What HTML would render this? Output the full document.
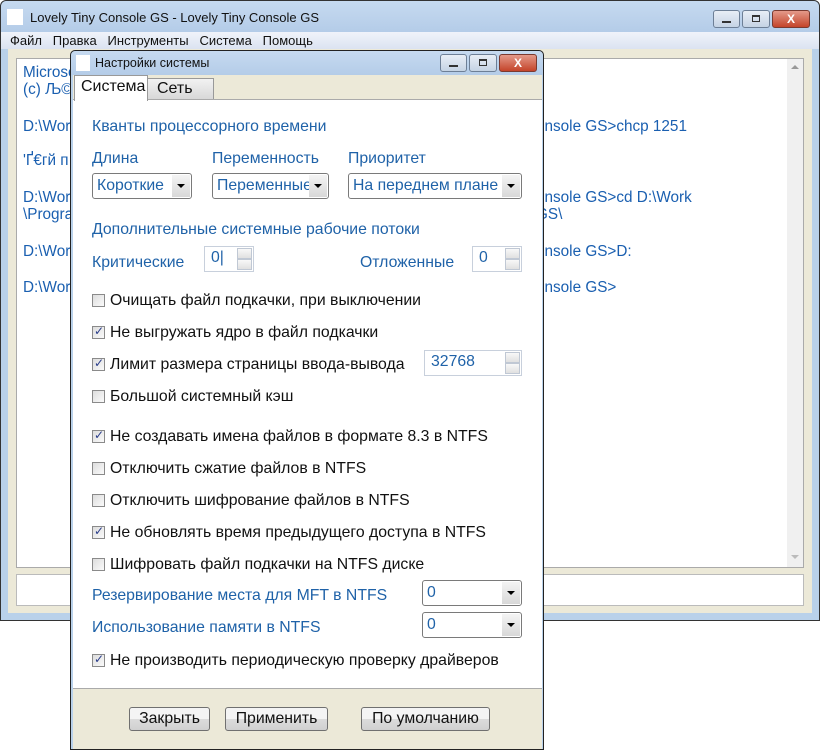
<!DOCTYPE html>
<html><head><meta charset="utf-8"><style>
*{box-sizing:border-box;margin:0;padding:0}
body{width:820px;height:750px;background:#fff;position:relative;overflow:hidden;font-family:"Liberation Sans","DejaVu Sans",sans-serif}
.a{position:absolute}
.main{left:0;top:0;width:820px;height:621px;border:1px solid #333;border-radius:6px 6px 0 0;background:#b9d1ea}
.tb{background:linear-gradient(#c6daf0,#b4cce8)}
.wbtn{position:absolute;top:0;height:18px;border:1px solid #6d7f96;border-radius:3px;background:linear-gradient(#e8eef6,#c5d3e4)}
.wbtn.x{background:linear-gradient(#e49a8a,#c4442a);border-color:#7a3a30;color:#fff;font-weight:bold;font-size:12px;text-align:center;line-height:16px}
.con{font-size:15.3px;color:#1a5fb0;white-space:nowrap}
.lbl{font-size:15.8px;color:#1f62a8;white-space:nowrap}
.blk{font-size:15.8px;color:#111;white-space:nowrap}
.combo{position:absolute;height:26px;border:1px solid #7a7a7a;border-radius:3px;background:#fff;font-size:15.8px;color:#1f62a8;padding:3px 0 0 4px;overflow:hidden;white-space:nowrap}
.combo .ar{position:absolute;right:1px;top:1px;width:18px;height:22px;background:linear-gradient(#f4f4f4,#d8d8d8)}
.combo .ar:after{content:"";position:absolute;left:5px;top:9px;border-left:4px solid transparent;border-right:4px solid transparent;border-top:4px solid #000}
.spin{position:absolute;height:26px;border:1px solid #c8d0dc;background:#fff;font-size:15.8px;color:#1f62a8;padding:2px 0 0 6px}
.spin .up,.spin .dn{position:absolute;right:1px;width:15px;height:11px;border:1px solid #c0c8d4;background:linear-gradient(#f8f8f8,#e0e0e0)}
.spin .up{top:1px}.spin .dn{top:12px}
.cb{position:absolute;left:92px;width:13px;height:13px;border:1px solid #8a8a8a;background:linear-gradient(135deg,#ddd,#fafafa)}
.cb.c:after{content:"✓";position:absolute;left:1px;top:-3px;font-size:12px;color:#2a3d8a;font-weight:bold}
.btn{position:absolute;height:24px;border:1px solid #707070;border-radius:3px;background:linear-gradient(#f4f4f4 50%,#dcdcdc 50%,#d0d0d0);font-size:15.8px;color:#111;text-align:center;line-height:21px}
</style></head><body>
<div class="a main">
 <div class="a tb" style="left:0;top:0;width:818px;height:31px;border-radius:6px 6px 0 0"></div>
 <div class="a" style="left:6px;top:8px;width:16px;height:16px;background:#fff"></div>
 <div class="a" style="left:29px;top:9px;font-size:13px;color:#111">Lovely Tiny Console GS - Lovely Tiny Console GS</div>
 <div class="wbtn" style="left:712px;top:9px;width:27px"><div class="a" style="left:8px;top:10px;width:9px;height:2px;background:#333"></div></div>
 <div class="wbtn" style="left:741px;top:9px;width:28px"><div class="a" style="left:9px;top:4px;width:8px;height:7px;border:1px solid #333;border-top-width:2px"></div></div>
 <div class="wbtn x" style="left:771px;top:9px;width:38px">X</div>
 <div class="a" style="left:0;top:31px;width:818px;height:17px;background:linear-gradient(#f0f3fa,#dbe3f1);font-size:13px;color:#111;padding:1px 0 0 9px">Файл&nbsp;&nbsp;&nbsp;Правка&nbsp;&nbsp;&nbsp;Инструменты&nbsp;&nbsp;&nbsp;Система&nbsp;&nbsp;&nbsp;Помощь</div>
 <div class="a" style="left:7px;top:48px;width:804px;height:564px;background:#ece9d8"></div>
 <div class="a" style="left:15px;top:57px;width:788px;height:510px;background:#fff;border:1px solid #aaa;overflow:hidden">
  <div class="a" style="right:0;top:0;width:16px;height:508px;background:#f0f0f0"></div>
  <div class="a" style="right:4px;top:6px;border-left:4px solid transparent;border-right:4px solid transparent;border-bottom:4px solid #999"></div>
  <div class="a" style="right:4px;bottom:8px;border-left:4px solid transparent;border-right:4px solid transparent;border-top:4px solid #bbb"></div>
  <div class="a con" style="left:6px;top:5px">Microsoft</div>
  <div class="a con" style="left:6px;top:22px">(c) Љ©</div>
  <div class="a con" style="left:6px;top:59px">D:\Work</div>
  <div class="a con" style="left:6px;top:93px">'Ґ€гй п</div>
  <div class="a con" style="left:6px;top:130px">D:\Work</div>
  <div class="a con" style="left:6px;top:147px">\Programs</div>
  <div class="a con" style="left:6px;top:184px">D:\Work</div>
  <div class="a con" style="left:6px;top:220px">D:\Work</div>
  <div class="a con" style="left:519px;top:59px">onsole GS&gt;chcp 1251</div>
  <div class="a con" style="left:519px;top:130px">onsole GS&gt;cd D:\Work</div>
  <div class="a con" style="left:519px;top:147px">GS\</div>
  <div class="a con" style="left:519px;top:184px">onsole GS&gt;D:</div>
  <div class="a con" style="left:519px;top:220px">onsole GS&gt;</div>
 </div>
 <div class="a" style="left:15px;top:573px;width:788px;height:32px;background:#fff;border:1px solid #bbb"></div>
</div>

<div class="a" style="left:70px;top:50px;width:474px;height:700px;border:1px solid #222;border-radius:5px 5px 0 0;background:#b9d1ea">
 <div class="a tb" style="left:0;top:0;width:472px;height:24px;border-radius:5px 5px 0 0"></div>
 <div class="a" style="left:5px;top:4px;width:14px;height:16px;background:#fff"></div>
 <div class="a" style="left:24px;top:5px;font-size:12.5px;color:#111">Настройки системы</div>
 <div class="wbtn" style="left:369px;top:3px;width:27px"><div class="a" style="left:8px;top:10px;width:9px;height:2px;background:#333"></div></div>
 <div class="wbtn" style="left:398px;top:3px;width:28px"><div class="a" style="left:9px;top:4px;width:8px;height:7px;border:1px solid #333;border-top-width:2px"></div></div>
 <div class="wbtn x" style="left:428px;top:3px;width:38px">X</div>
 <div class="a" style="left:2px;top:24px;width:469px;height:674px;background:#ece9d8"></div>
 <div class="a" style="left:76px;top:27px;width:67px;height:22px;border:1px solid #999;background:linear-gradient(#f2f2f2,#d8d8d8);font-size:16px;color:#111;padding:1px 0 0 9px">Сеть</div>
 <div class="a" style="left:2px;top:48px;width:469px;height:590px;background:#fff;border:1px solid #aaa;border-left:none;border-right:none"></div>
 <div class="a" style="left:3px;top:24px;width:74px;height:26px;background:#fff;border:1px solid #999;border-bottom:none;font-size:16px;color:#111;padding:2px 0 0 6px">Система</div>
</div>

<div class="a lbl" style="left:92px;top:118px">Кванты процессорного времени</div>
<div class="a lbl" style="left:92px;top:150px">Длина</div>
<div class="a lbl" style="left:212px;top:150px">Переменность</div>
<div class="a lbl" style="left:348px;top:150px">Приоритет</div>
<div class="combo" style="left:92px;top:173px;width:100px">Короткие<div class="ar"></div></div>
<div class="combo" style="left:212px;top:173px;width:117px">Переменные<div class="ar"></div></div>
<div class="combo" style="left:348px;top:173px;width:174px">На переднем плане<div class="ar"></div></div>
<div class="a lbl" style="left:92px;top:221px">Дополнительные системные рабочие потоки</div>
<div class="a lbl" style="left:92px;top:254px">Критические</div>
<div class="spin" style="left:204px;top:246px;width:50px">0|<div class="up"></div><div class="dn"></div></div>
<div class="a lbl" style="left:360px;top:254px">Отложенные</div>
<div class="spin" style="left:472px;top:246px;width:50px">0<div class="up"></div><div class="dn"></div></div>

<div class="cb" style="top:294px"></div><div class="a blk" style="left:110px;top:292px">Очищать файл подкачки, при выключении</div>
<div class="cb c" style="top:326px"></div><div class="a blk" style="left:110px;top:324px">Не выгружать ядро в файл подкачки</div>
<div class="cb c" style="top:358px"></div><div class="a blk" style="left:110px;top:356px">Лимит размера страницы ввода-вывода</div>
<div class="spin" style="left:424px;top:350px;width:98px">32768<div class="up"></div><div class="dn"></div></div>
<div class="cb" style="top:390px"></div><div class="a blk" style="left:110px;top:388px">Большой системный кэш</div>
<div class="cb c" style="top:430px"></div><div class="a blk" style="left:110px;top:428px">Не создавать имена файлов в формате 8.3 в NTFS</div>
<div class="cb" style="top:462px"></div><div class="a blk" style="left:110px;top:460px">Отключить сжатие файлов в NTFS</div>
<div class="cb" style="top:494px"></div><div class="a blk" style="left:110px;top:492px">Отключить шифрование файлов в NTFS</div>
<div class="cb c" style="top:526px"></div><div class="a blk" style="left:110px;top:524px">Не обновлять время предыдущего доступа в NTFS</div>
<div class="cb" style="top:558px"></div><div class="a blk" style="left:110px;top:556px">Шифровать файл подкачки на NTFS диске</div>
<div class="a lbl" style="left:92px;top:587px">Резервирование места для MFT в NTFS</div>
<div class="combo" style="left:422px;top:580px;width:100px">0<div class="ar"></div></div>
<div class="a lbl" style="left:92px;top:619px">Использование памяти в NTFS</div>
<div class="combo" style="left:422px;top:612px;width:100px">0<div class="ar"></div></div>
<div class="cb c" style="top:654px"></div><div class="a blk" style="left:110px;top:652px">Не производить периодическую проверку драйверов</div>

<div class="btn" style="left:129px;top:707px;width:81px">Закрыть</div>
<div class="btn" style="left:225px;top:707px;width:103px">Применить</div>
<div class="btn" style="left:361px;top:707px;width:129px">По умолчанию</div>
</body></html>
